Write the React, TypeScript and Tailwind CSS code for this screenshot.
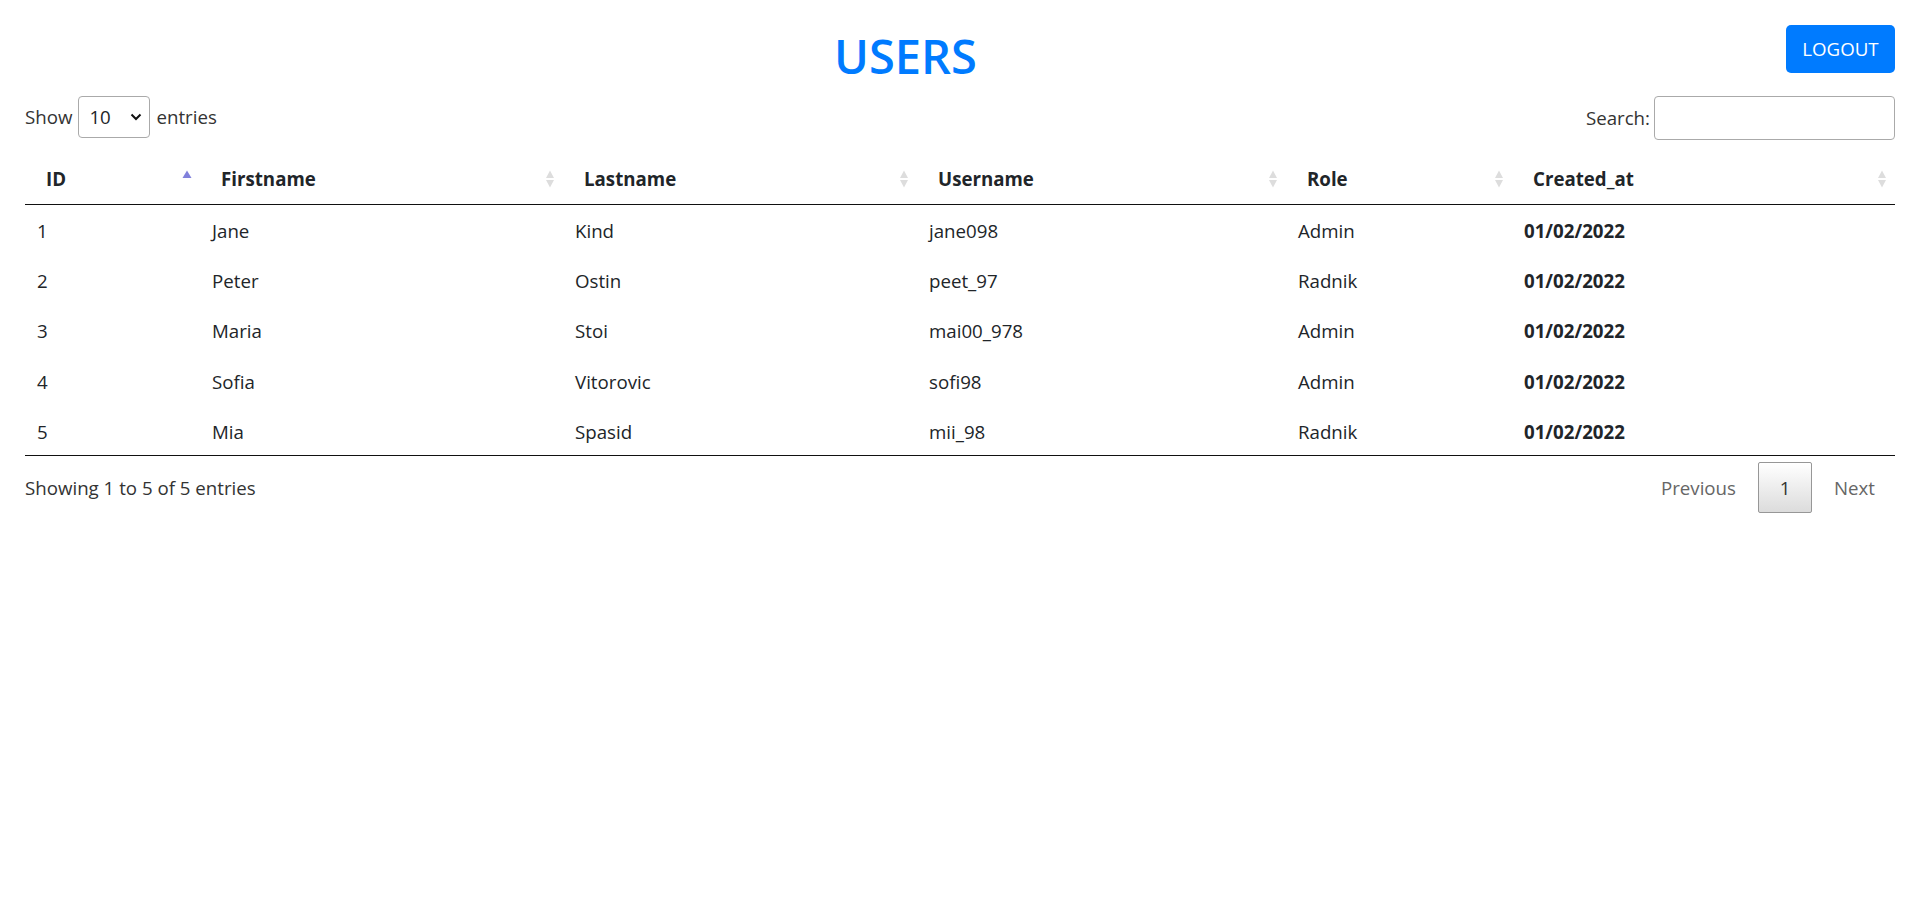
import React from 'react';

const users = [
  { id: 1, firstname: 'Jane', lastname: 'Kind', username: 'jane098', role: 'Admin', created: '01/02/2022' },
  { id: 2, firstname: 'Peter', lastname: 'Ostin', username: 'peet_97', role: 'Radnik', created: '01/02/2022' },
  { id: 3, firstname: 'Maria', lastname: 'Stoi', username: 'mai00_978', role: 'Admin', created: '01/02/2022' },
  { id: 4, firstname: 'Sofia', lastname: 'Vitorovic', username: 'sofi98', role: 'Admin', created: '01/02/2022' },
  { id: 5, firstname: 'Mia', lastname: 'Spasid', username: 'mii_98', role: 'Radnik', created: '01/02/2022' },
];

const columns = [
  { label: 'ID', width: 'w-[175px]', active: true },
  { label: 'Firstname', width: 'w-[363px]' },
  { label: 'Lastname', width: 'w-[354px]' },
  { label: 'Username', width: 'w-[369px]' },
  { label: 'Role', width: 'w-[226px]' },
  { label: 'Created_at', width: 'w-[383px]' },
];

function SortIcon({ active }: { active?: boolean }) {
  return (
    <svg width="10" height="18" viewBox="0 0 10 18" className="shrink-0">
      {active ? (
        <path d="M5 0.5 L9.5 8 L0.5 8 Z" fill="#8181dc" />
      ) : (
        <>
          <path d="M5 0.5 L9 8 L1 8 Z" fill="#dddddd" />
          <path d="M1 10 L9 10 L5 17.5 Z" fill="#dddddd" />
        </>
      )}
    </svg>
  );
}

export default function App() {
  return (
    <div className="min-h-screen bg-white px-[25px] text-[18.7px] text-[#212529] font-['Open_Sans',sans-serif]">
      {/* Header */}
      <div className="mt-[25px] flex h-[48px] items-start">
        <div className="flex-1 flex justify-center">
          <h1 className="mt-[3px] text-[47px] font-semibold leading-[1.2] text-[#007bff]">USERS</h1>
        </div>
        <button className="h-[48px] w-[109px] rounded-[5px] bg-[#007bff] text-white text-[18.7px]">
          LOGOUT
        </button>
      </div>

      {/* Controls */}
      <div className="flex items-start justify-between mt-[23px]">
        <div className="flex items-center gap-[6px] h-[42px] text-[#333]">
          <span>Show</span>
          <div className="relative">
            <select
              defaultValue="10"
              className="appearance-none h-[42px] w-[72px] rounded-[4px] border border-[#aaa] bg-white pl-[10px] text-[#212529] outline-none"
            >
              <option value="10">10</option>
              <option value="25">25</option>
              <option value="50">50</option>
              <option value="100">100</option>
            </select>
            <svg
              width="12"
              height="8"
              viewBox="0 0 12 8"
              className="pointer-events-none absolute right-[8px] top-[17px]"
            >
              <path d="M1.5 1.5 L6 6 L10.5 1.5" fill="none" stroke="#111" strokeWidth="2" />
            </svg>
          </div>
          <span>entries</span>
        </div>
        <div className="flex items-center gap-[4px] h-[44px] text-[#333]">
          <label htmlFor="search">Search:</label>
          <input
            id="search"
            type="search"
            className="h-[44px] w-[241px] rounded-[4px] border border-[#aaa] bg-white px-[6px] outline-none"
          />
        </div>
      </div>

      {/* Table */}
      <table className="mt-[12px] w-full table-fixed border-collapse">
        <thead>
          <tr>
            {columns.map((c) => (
              <th
                key={c.label}
                className={`${c.width} h-[52px] border-b border-[#111] pl-[21px] pr-[8px] pt-[2px] text-left font-bold`}
              >
                <div className="flex items-center justify-between">
                  <span>{c.label}</span>
                  <SortIcon active={c.active} />
                </div>
              </th>
            ))}
          </tr>
        </thead>
        <tbody className="border-b border-[#111]">
          {users.map((u) => (
            <tr key={u.id} className="[&>td]:pt-[3px] [&>td]:pl-[12px]">
              <td className="h-[50.4px]">{u.id}</td>
              <td>{u.firstname}</td>
              <td>{u.lastname}</td>
              <td>{u.username}</td>
              <td>{u.role}</td>
              <td className="font-bold">{u.created}</td>
            </tr>
          ))}
        </tbody>
      </table>

      {/* Footer */}
      <div className="flex items-center justify-between pt-[6px]">
        <div className="text-[#333]">Showing 1 to 5 of 5 entries</div>
        <div className="flex items-center">
          <span className="flex h-[51px] items-center border border-transparent px-[19px] text-[#666]">Previous</span>
          <span className="ml-[2px] flex h-[51px] min-w-[54px] items-center justify-center rounded-[2px] border border-[#979797] bg-linear-to-b from-white to-[#dcdcdc] px-[19px] text-[#333]">
            1
          </span>
          <span className="ml-[2px] flex h-[51px] items-center border border-transparent px-[19px] text-[#666]">Next</span>
        </div>
      </div>
    </div>
  );
}
